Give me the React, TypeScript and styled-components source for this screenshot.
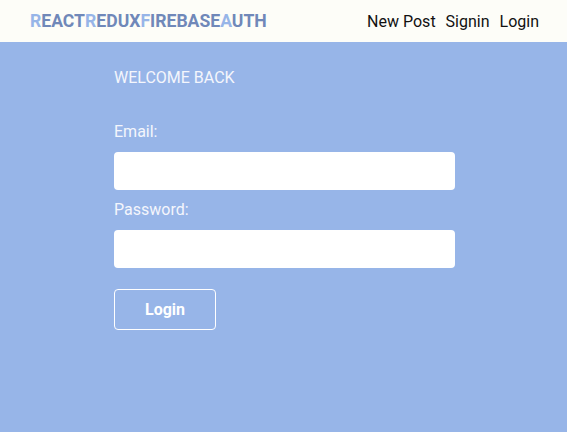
import React from "react";
import styled, { createGlobalStyle } from "styled-components";

const Global = createGlobalStyle`
  html, body { margin: 0; padding: 0; }
  body {
    background: #97b5e8;
    font-family: Roboto, "Liberation Sans", sans-serif;
    min-height: 432px;
  }
`;

const Header = styled.header`
  height: 42px;
  background: #fdfdf8;
  display: flex;
  align-items: center;
  justify-content: space-between;
  padding: 0 28px 0 30px;
  box-sizing: border-box;
`;

const Logo = styled.div`
  font-size: 17.6px;
  font-weight: 700;
  color: #7088b9;
`;

const Accent = styled.span`
  color: #97b5e8;
`;

const Nav = styled.nav`
  display: flex;
  gap: 10px;
`;

const NavLink = styled.a`
  font-size: 16px;
  color: #111;
  text-decoration: none;
`;

const Main = styled.main`
  width: 341px;
  margin: 0 0 0 114px;
  padding-top: 26px;
  display: flex;
  flex-direction: column;
  color: #f4f6fc;
`;

const Title = styled.h2`
  margin: 0 0 35px;
  font-size: 16px;
  font-weight: 400;
  line-height: 19px;
`;

const Label = styled.label`
  font-size: 16px;
  line-height: 19px;
  margin-bottom: 11px;
`;

const Input = styled.input`
  height: 38px;
  border: none;
  border-radius: 4px;
  background: #fff;
  margin-bottom: 10px;
  box-sizing: border-box;
  padding: 0 10px;
  font-size: 16px;
`;

const Button = styled.button`
  margin-top: 11px;
  width: 102px;
  height: 41px;
  border: 1px solid #fff;
  border-radius: 4px;
  background: transparent;
  color: #fff;
  font-family: Roboto, "Liberation Sans", sans-serif;
  font-weight: 700;
  font-size: 16px;
`;

export default function App() {
  return (
    <>
      <Global />
      <Header>
        <Logo>
          <Accent>R</Accent>EACT<Accent>R</Accent>EDUX<Accent>F</Accent>IREBASE<Accent>A</Accent>UTH
        </Logo>
        <Nav>
          <NavLink>New Post</NavLink>
          <NavLink>Signin</NavLink>
          <NavLink>Login</NavLink>
        </Nav>
      </Header>
      <Main>
        <Title>WELCOME BACK</Title>
        <Label>Email:</Label>
        <Input type="email" />
        <Label>Password:</Label>
        <Input type="password" />
        <Button>Login</Button>
      </Main>
    </>
  );
}
